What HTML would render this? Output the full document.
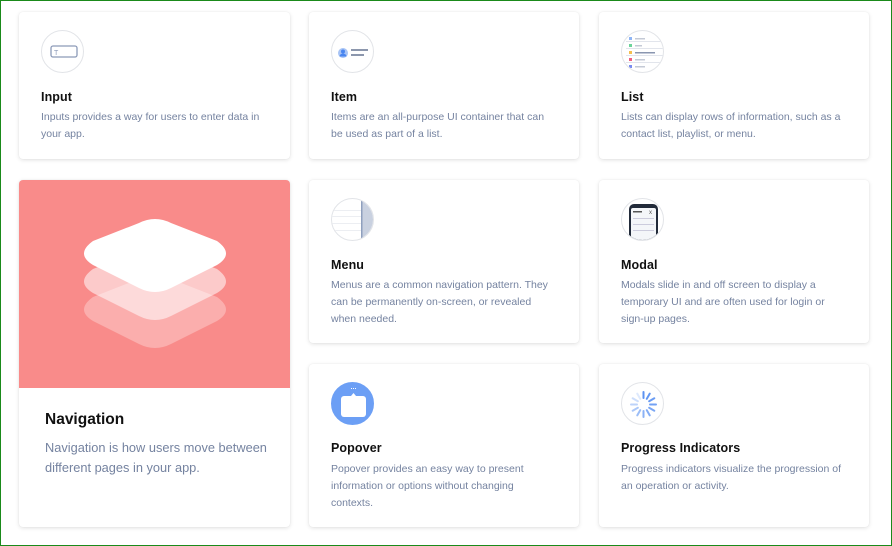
<!DOCTYPE html>
<html><head><style>
*{margin:0;padding:0;box-sizing:border-box}
body{width:892px;height:546px;background:#fff;font-family:"Liberation Sans",sans-serif;position:relative;overflow:hidden}
.frame{position:absolute;left:0;top:0;width:892px;height:546px;border:1px solid #1a8a1a}
.card{position:absolute;background:#fff;border-radius:4px;box-shadow:0 1px 4px rgba(0,0,0,.12),0 0 1px rgba(0,0,0,.08);overflow:hidden}
.ic{position:absolute;left:22px;top:18px;width:43px;height:43px;border-radius:50%;border:1px solid #e2e4e8;background:#fff;overflow:hidden}
.t{position:absolute;left:22px;font-size:12.5px;font-weight:bold;color:#111;letter-spacing:.1px}
.d{position:absolute;left:22px;right:25px;font-size:10.5px;line-height:17px;color:#7583a0}
</style></head><body>
<div class="frame"></div>

<div class="card" style="left:19px;top:12px;width:271px;height:147px">
 <div class="ic"><svg width="43" height="43"><rect x="9" y="15" width="26" height="11" rx="2" fill="#fff" stroke="#8c9ab8" stroke-width="1.3"/><text x="12" y="24" font-size="7" fill="#8c9ab8" font-family="Liberation Sans">T</text></svg></div>
 <div class="t" style="top:78px">Input</div>
 <div class="d" style="top:97px">Inputs provides a way for users to enter data in your app.</div>
</div>
<div class="card" style="left:309px;top:12px;width:270px;height:147px">
 <div class="ic"><svg width="43" height="43"><circle cx="11" cy="22" r="5" fill="#a8c4f5"/><circle cx="11" cy="20.5" r="2" fill="#4a86f0"/><path d="M7.5 25.5a3.5 3 0 0 1 7 0z" fill="#4a86f0"/><rect x="19" y="18" width="17" height="2" fill="#8c97ad"/><rect x="19" y="23" width="13" height="2" fill="#8c97ad"/></svg></div>
 <div class="t" style="top:78px">Item</div>
 <div class="d" style="top:97px">Items are an all-purpose UI container that can be used as part of a list.</div>
</div>
<div class="card" style="left:599px;top:12px;width:270px;height:147px">
 <div class="ic"><svg width="43" height="43"><g fill="#e2e5ec"><rect x="4" y="10" width="40" height="1"/><rect x="4" y="17" width="40" height="1"/><rect x="4" y="24" width="40" height="1"/><rect x="4" y="31" width="40" height="1"/></g><rect x="7" y="6" width="3" height="3" fill="#8fb5f5"/><rect x="13" y="7" width="10" height="1.5" fill="#c4cad6"/><rect x="7" y="13" width="3" height="3" fill="#6cd49a"/><rect x="13" y="14" width="7" height="1.5" fill="#c4cad6"/><rect x="7" y="20" width="3" height="3" fill="#f5c050"/><rect x="13" y="21" width="20" height="1.5" fill="#8a96b0"/><rect x="7" y="27" width="3" height="3" fill="#f06080"/><rect x="13" y="28" width="10" height="1.5" fill="#c4cad6"/><rect x="7" y="34" width="3" height="3" fill="#7a8cf0"/><rect x="13" y="35" width="10" height="1.5" fill="#c4cad6"/></svg></div>
 <div class="t" style="top:78px">List</div>
 <div class="d" style="top:97px">Lists can display rows of information, such as a contact list, playlist, or menu.</div>
</div>

<div class="card" style="left:19px;top:180px;width:271px;height:347px">
 <div style="position:absolute;left:0;top:0;width:271px;height:208px;background:#f98b8a">
  <svg width="271" height="208" style="position:absolute;left:0;top:0">
   <defs><path id="L" d="M-62 -14 Q-80 -1 -62 10 L-16 33 Q0 41 16 33 L62 10 Q80 -1 62 -14 L16 -32 Q0 -40 -16 -32 Z"/></defs>
   <use href="#L" x="136" y="131" fill="#fff" opacity=".3"/>
   <use href="#L" x="136" y="103" fill="#fff" opacity=".55"/>
   <use href="#L" x="136" y="75" fill="#fff"/>
  </svg>
 </div>
 <div style="position:absolute;left:26px;top:231px;font-size:15.5px;font-weight:bold;color:#111">Navigation</div>
 <div style="position:absolute;left:26px;top:258px;width:225px;font-size:12.8px;line-height:20px;color:#7583a0">Navigation is how users move between different pages in your app.</div>
</div>

<div class="card" style="left:309px;top:180px;width:270px;height:163px">
 <div class="ic"><svg width="43" height="43"><g fill="#eceef2"><rect x="0" y="11" width="30" height="1"/><rect x="0" y="17" width="30" height="1"/><rect x="0" y="24" width="30" height="1"/><rect x="0" y="31" width="30" height="1"/></g><rect x="29" y="0" width="14" height="43" fill="#c9d1e0"/><rect x="29" y="0" width="1.5" height="43" fill="#8fa0be"/></svg></div>
 <div class="t" style="top:78px">Menu</div>
 <div class="d" style="top:97px">Menus are a common navigation pattern. They can be permanently on-screen, or revealed when needed.</div>
</div>
<div class="card" style="left:599px;top:180px;width:270px;height:163px">
 <div class="ic"><svg width="43" height="43"><rect x="7" y="5" width="29" height="40" rx="5" fill="#222b3a"/><rect x="9" y="9" width="25" height="36" rx="2" fill="#f4f6f9"/><rect x="11" y="12" width="9" height="1.5" fill="#555"/><text x="27" y="15" font-size="6" fill="#555" font-family="Liberation Sans">x</text><rect x="11" y="19" width="21" height="1" fill="#ccd"/><rect x="11" y="25" width="21" height="1" fill="#ccd"/><rect x="11" y="31" width="21" height="1" fill="#ccd"/></svg></div>
 <div class="t" style="top:78px">Modal</div>
 <div class="d" style="top:97px">Modals slide in and off screen to display a temporary UI and are often used for login or sign-up pages.</div>
</div>

<div class="card" style="left:309px;top:364px;width:270px;height:163px">
 <div class="ic" style="background:#6c9ff5;border-color:#6c9ff5"><svg width="43" height="43"><rect x="9" y="13" width="25" height="21" rx="3" fill="#fff"/><path d="M19 13l2.5-3 2.5 3z" fill="#fff"/><rect x="19" y="5" width="1" height="1" fill="#fff"/><rect x="21" y="5" width="1" height="1" fill="#fff"/><rect x="23" y="5" width="1" height="1" fill="#fff"/></svg></div>
 <div class="t" style="top:77px">Popover</div>
 <div class="d" style="top:97px">Popover provides an easy way to present information or options without changing contexts.</div>
</div>
<div class="card" style="left:599px;top:364px;width:270px;height:163px">
 <div class="ic"><svg width="43" height="43"><g stroke="#5b92f2" stroke-width="2" stroke-linecap="round"><line x1="21.5" y1="9" x2="21.5" y2="15"/><line x1="21.5" y1="9" x2="21.5" y2="15" transform="rotate(30 21.5 21.5)" opacity=".95"/><line x1="21.5" y1="9" x2="21.5" y2="15" transform="rotate(60 21.5 21.5)" opacity=".9"/><line x1="21.5" y1="9" x2="21.5" y2="15" transform="rotate(90 21.5 21.5)" opacity=".85"/><line x1="21.5" y1="9" x2="21.5" y2="15" transform="rotate(120 21.5 21.5)" opacity=".8"/><line x1="21.5" y1="9" x2="21.5" y2="15" transform="rotate(150 21.5 21.5)" opacity=".75"/><line x1="21.5" y1="9" x2="21.5" y2="15" transform="rotate(180 21.5 21.5)" opacity=".7"/><line x1="21.5" y1="9" x2="21.5" y2="15" transform="rotate(210 21.5 21.5)" opacity=".6"/><line x1="21.5" y1="9" x2="21.5" y2="15" transform="rotate(240 21.5 21.5)" opacity=".5"/><line x1="21.5" y1="9" x2="21.5" y2="15" transform="rotate(270 21.5 21.5)" opacity=".4"/><line x1="21.5" y1="9" x2="21.5" y2="15" transform="rotate(300 21.5 21.5)" opacity=".3"/><line x1="21.5" y1="9" x2="21.5" y2="15" transform="rotate(330 21.5 21.5)" opacity=".2"/></g></svg></div>
 <div class="t" style="top:77px">Progress Indicators</div>
 <div class="d" style="top:97px">Progress indicators visualize the progression of an operation or activity.</div>
</div>
</body></html>
